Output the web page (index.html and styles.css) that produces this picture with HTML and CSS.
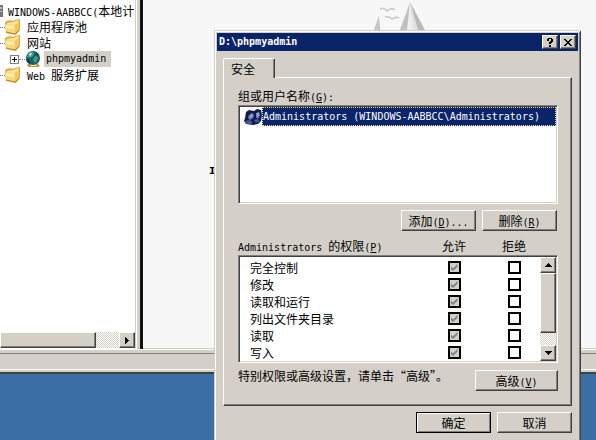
FILE: index.html
```html
<!DOCTYPE html>
<html lang="zh-CN">
<head>
<meta charset="utf-8">
<title>D:\phpmyadmin</title>
<link rel="stylesheet" href="styles.css">
</head>
<body>
<svg class="defs" aria-hidden="true">
  <symbol id="folder" viewBox="0 0 16 16">
    <path d="M0 4l1-2 5-1 1 1 7-2h1v11l-4 5-10-2z" fill="#dfae43"/>
    <path d="M2 4l6-1 6-2v9l-5 4-7-1z" fill="#ffe596"/>
    <path d="M1 5l9 1v9l-9-2z" fill="#fbd97a"/>
    <path d="M1 6l8 1v3l-8-1z" fill="#fff0b8"/>
    <path d="M10 6l4-4v9l-4 4z" fill="#f0c860"/>
    <path d="M1 13l9 2 4-4" fill="none" stroke="#b5842c"/>
  </symbol>
  <symbol id="up" viewBox="0 0 7 4"><path d="M3 0h1v1h1v1h1v1h1v1H0V3h1V2h1V1h1z"/></symbol>
</svg>

<main class="console">
  <div class="panes">
    <nav class="tree" aria-label="控制台树">
      <ul>
        <li class="row root">
          <svg class="server" viewBox="0 0 3 12" aria-hidden="true"><path d="M0 0h3v12H0z" fill="#777"/><path d="M0 2h2v2H0zM0 6h2v1H0z" fill="#bbb"/></svg>
          <span><span class="en">WINDOWS-AABBCC(</span>本地计</span>
        </li>
        <li class="row"><i class="dots"></i><svg class="icon"><use href="#folder"/></svg><span>应用程序池</span></li>
        <li class="row"><i class="dots"></i><svg class="icon"><use href="#folder"/></svg><span>网站</span></li>
        <li class="row child">
          <button class="expander" aria-label="展开"></button><i class="dots"></i>
          <svg class="icon globe" viewBox="0 0 16 16" aria-hidden="true">
            <path d="M4 12h8l3 3-3 1H4l-2-2z" fill="#b99236"/>
            <path d="M5 13h6l1 1-2 1H6z" fill="#ffeec0"/>
            <circle cx="8" cy="7" r="7" fill="#12615f"/>
            <path d="M3 2l4-2 2 2-1 3-3 2-3-1zM10 5l3 1-1 4-2 2-2-3z" fill="#3f9e86"/>
            <path d="M4 3l2-1 1 1-2 2z" fill="#d8fff2"/>
            <path d="M1 8l3 1 1 4-3-2zM11 1l3 3-2 0z" fill="#0b3658"/>
          </svg>
          <span class="en selected">phpmyadmin</span>
        </li>
        <li class="row"><i class="dots"></i><svg class="icon"><use href="#folder"/></svg><span><span class="en">Web </span>服务扩展</span></li>
      </ul>
      <div class="hscroll">
        <div class="thumb"></div>
        <button class="arrow" aria-label="向右滚动"><svg width="4" height="7" viewBox="0 0 4 7"><path d="M0 0h1v1h1v1h1v1h1v1H3v1H2v1H1v1H0z"/></svg></button>
      </div>
    </nav>
    <section class="details" aria-label="详细信息">
      <svg class="sails" viewBox="0 0 54 30" aria-hidden="true">
        <path d="M6 16l1 14H1z" fill="#bbb"/><path d="M6 16l-1 14H3z" fill="#ccc"/>
        <path d="M37 2l-2 28h-8z" fill="#c0c0c0"/>
        <path d="M37 2l-3 28h6z" fill="#eee"/>
        <path d="M37 2l15 28h-8z" fill="#b8b8b8"/>
        <path d="M37 2l8 28h-5z" fill="#e2e2e2"/>
        <path d="M7 9q4-2 7 2 4-4 8-1M12 17q4-1 7 2 4-3 7-1" fill="none" stroke="#c6c6c6" stroke-width="1.5"/>
      </svg>
      <span class="fragment">I</span>
    </section>
  </div>
  <div class="status"></div>
</main>

<div class="dialog" role="dialog" aria-labelledby="title">
  <header class="titlebar">
    <h1 id="title" class="en">D:\phpmyadmin</h1>
    <button class="caption" aria-label="帮助"><svg width="8" height="9" viewBox="0 0 8 9"><path d="M2 0h4v1h1v3H6v1H5v1H3V4h1V3h1V1H3v2H1V1h1zM3 7h2v2H3z"/></svg></button>
    <button class="caption" aria-label="关闭"><svg width="8" height="7" viewBox="0 0 8 7"><path d="M0 0h2v1h1v1h2V1h1V0h2v1H7v1H6v1H5v1h1v1h1v1h1v1H6V6H5V5H3v1H2v1H0V6h1V5h1V4h1V3H2V2H1V1H0z"/></svg></button>
  </header>
  <div class="tabs" role="tablist"><button class="tab" role="tab" aria-selected="true">安全</button></div>
  <section class="panel">
    <p class="label">组或用户名称<span class="en">(<u>G</u>):</span></p>
    <ul class="box users">
      <li class="user">
        <svg class="people" viewBox="0 0 18 16" aria-hidden="true">
          <path d="M2 3l3-2 5 1 3-2 4 1 1 5-1 6-3 3-5 1-7-1-2-3 1-3z" fill="#101c4e"/>
          <path d="M5 6l3-2 2 2-1 3-3 2-2-2zM12 4l3-1 1 3-2 4-2-2z" fill="#7887b8"/>
          <path d="M1 12l5-1 3 3-2 1H2zM10 11l3-1 3 2-4 2z" fill="#4257a2"/>
          <path d="M6 7l2-1v2zM13 5l2-1-1 3z" fill="#c1c8dd"/>
        </svg>
        <span class="en picked">Administrators (WINDOWS-AABBCC\Administrators)</span>
      </li>
    </ul>
    <div class="actions">
      <button class="btn">添加<span class="en">(<u>D</u>)...</span></button>
      <button class="btn">删除<span class="en">(<u>R</u>)</span></button>
    </div>
    <div class="heads">
      <span><span class="en">Administrators </span>的权限<span class="en">(<u>P</u>)</span></span>
      <span class="col">允许</span><span class="col">拒绝</span>
    </div>
    <div class="box perms">
      <table aria-label="Administrators 的权限">
        <tr><th scope="row">完全控制</th><td><input type="checkbox" aria-label="允许完全控制" checked disabled></td><td><input type="checkbox" aria-label="拒绝完全控制"></td></tr>
        <tr><th scope="row">修改</th><td><input type="checkbox" aria-label="允许修改" checked disabled></td><td><input type="checkbox" aria-label="拒绝修改"></td></tr>
        <tr><th scope="row">读取和运行</th><td><input type="checkbox" aria-label="允许读取和运行" checked disabled></td><td><input type="checkbox" aria-label="拒绝读取和运行"></td></tr>
        <tr><th scope="row">列出文件夹目录</th><td><input type="checkbox" aria-label="允许列出文件夹目录" checked disabled></td><td><input type="checkbox" aria-label="拒绝列出文件夹目录"></td></tr>
        <tr><th scope="row">读取</th><td><input type="checkbox" aria-label="允许读取" checked disabled></td><td><input type="checkbox" aria-label="拒绝读取"></td></tr>
        <tr><th scope="row">写入</th><td><input type="checkbox" aria-label="允许写入" checked disabled></td><td><input type="checkbox" aria-label="拒绝写入"></td></tr>
      </table>
      <div class="vscroll">
        <button class="arrow" aria-label="向上滚动"><svg width="7" height="4"><use href="#up"/></svg></button>
        <div class="thumb"></div>
        <button class="arrow" aria-label="向下滚动"><svg class="down" width="7" height="4"><use href="#up"/></svg></button>
      </div>
    </div>
    <div class="advanced">
      <p>特别权限或高级设置，请单击“高级”。</p>
      <button class="btn wide">高级<span class="en">(<u>V</u>)</span></button>
    </div>
  </section>
  <footer class="actions">
    <button class="btn default">确定</button>
    <button class="btn">取消</button>
  </footer>
</div>
</body>
</html>
```
FILE: styles.css
```css
:root {
  --face: #d4d0c8;
  --dark: #404040;
  --shade: #808080;
  --navy: #0a246a;
}
* { box-sizing: border-box; }
html, body { height: 100%; }
body {
  margin: 0;
  overflow: hidden;
  background: #3a6ea5;
  color: #000;
  font: 12px/16px "Noto Sans CJK SC", sans-serif;
}
button {
  font: inherit;
  color: inherit;
  padding: 0;
  border-radius: 0;
}
ul, p, h1 { margin: 0; padding: 0; list-style: none; }
svg { display: block; flex: none; }
.defs { position: absolute; width: 0; height: 0; }
.en {
  font-family: "DejaVu Sans Mono", monospace;
  font-size: 10px;
  line-height: 10px;
  white-space: pre;
}

/* Console window */
.console {
  height: 85%;
  display: flex;
  flex-direction: column;
  background: var(--face);
  border-bottom: 2px solid var(--dark);
}
.panes {
  flex: 1;
  min-height: 0;
  display: grid;
  grid-template-columns: 137px 1fr;
  column-gap: 3px;
  border-bottom: 1px solid #fff;
}
.tree {
  display: flex;
  flex-direction: column;
  justify-content: space-between;
  min-width: 0;
  background: #fff;
  border-right: 1px solid #fff;
  padding: 3px 1px 1px 0;
  box-shadow: inset -1px 0 var(--face);
}
.row { display: flex; align-items: center; height: 16px; white-space: nowrap; }
.root { gap: 5px; }
.server { width: 3px; height: 12px; }
.icon { width: 16px; height: 16px; margin-right: 6px; }
.dots { width: 5px; border-top: 1px dotted var(--shade); }
.child { padding-left: 10px; }
.child .dots { width: 6px; }
.child .icon { margin-right: 3px; }
.expander {
  width: 9px;
  height: 9px;
  border: 1px solid var(--shade);
  background:
    linear-gradient(#000, #000) center / 5px 1px no-repeat,
    linear-gradient(#000, #000) center / 1px 5px no-repeat,
    #fff;
}
.selected { line-height: 16px; background: var(--face); padding: 0 5px 0 2px; }
.hscroll, .vscroll {
  display: flex;
  background: repeating-conic-gradient(#fff 0 25%, var(--face) 0 50%) 0 0 / 2px 2px;
}
.hscroll { height: 16px; }
.hscroll .thumb { width: 96px; }
.hscroll .arrow { margin-left: auto; }
.thumb, .arrow, .caption, .btn {
  background: var(--face);
  border: 1px solid;
  border-color: #fff var(--dark) var(--dark) #fff;
  box-shadow: inset -1px -1px var(--shade);
}
.arrow { width: 16px; height: 16px; display: grid; place-items: center; flex: none; }
.down { transform: rotate(180deg); }
.details {
  position: relative;
  background: #f7f7f7;
  border-left: 3px solid #111;
  box-shadow: inset 0 -1px var(--face);
}
.sails { position: absolute; left: 230px; top: 0; width: 54px; height: 30px; }
.fragment { position: absolute; left: 66px; top: 163px; font: bold 11px/16px "Liberation Mono", monospace; }
.status {
  flex: none;
  height: 19px;
  margin-top: 3px;
  border-top: 1px solid var(--shade);
  border-bottom: 2px solid var(--face);
  box-shadow: inset 0 -1px #fff;
}

/* Properties dialog */
.dialog {
  position: absolute;
  left: 214px;
  right: 15px;
  top: 30px;
  padding: 3px 3px 12px;
  background: var(--face);
  box-shadow:
    inset 1px 1px var(--face),
    inset -1px 0 var(--dark),
    inset 2px 2px #fff,
    inset -2px 0 var(--shade);
}
.titlebar {
  display: flex;
  align-items: center;
  height: 18px;
  padding: 0 2px;
  background: var(--navy);
  color: #fff;
}
.titlebar h1 { flex: 1; font-weight: bold; }
.caption { width: 16px; height: 14px; display: grid; place-items: center; color: #000; }
.caption + .caption { margin-left: 2px; }
.tabs { padding: 7px 6px 0; }
.tab {
  display: block;
  position: relative;
  width: 52px;
  height: 20px;
  margin-bottom: -1px;
  padding-right: 12px;
  line-height: 16px;
  background: var(--face);
  border: 1px solid #fff;
  border-right: 1px solid var(--dark);
  border-bottom: 0;
  border-radius: 2px 2px 0 0;
  box-shadow: inset -1px 0 var(--shade);
}
.panel {
  margin: 0 6px;
  padding: 10px 13px 14px 14px;
  border: 1px solid;
  border-color: #fff var(--dark) var(--dark) #fff;
  box-shadow: inset -1px -1px var(--shade);
}
.label { margin-bottom: 1px; }
.box {
  background: #fff;
  border: 1px solid;
  border-color: var(--shade) #fff #fff var(--shade);
  box-shadow: inset 1px 1px var(--dark), inset -1px -1px var(--face);
}
.users { height: 99px; padding: 1px; }
.user { display: flex; align-items: center; height: 19px; padding-left: 4px; }
.people { width: 18px; height: 16px; }
.picked {
  flex: 1;
  line-height: 17px;
  background: var(--navy);
  color: #fff;
  border: 1px dotted #f5db95;
}
.actions { display: flex; justify-content: flex-end; gap: 6px; margin-top: 6px; }
.panel .actions { padding-right: 1px; }
footer.actions { margin-right: 6px; }
.btn { width: 75px; height: 21px; line-height: 16px; white-space: nowrap; }
.wide { width: 83px; }
.default { outline: 1px solid #000; outline-offset: -1px; border-color: #000; box-shadow: inset 1px 1px #fff, inset -1px -1px var(--shade); }
.heads { display: flex; margin-top: 7px; padding-right: 14px; }
.heads > :first-child { flex: 1; }
.col { width: 60px; text-align: center; }
.perms { display: flex; height: 108px; margin-top: 1px; padding: 1px; overflow: hidden; }
table { flex: 1; border-spacing: 0; height: 102px; margin: 2px -4px 0 0; }
th { font-weight: normal; text-align: left; padding: 0 0 0 10px; }
td { width: 60px; padding: 0; }
tr { height: 17px; line-height: 16px; }
input {
  appearance: none;
  display: block;
  width: 13px;
  height: 13px;
  margin: 0 auto;
  border: 2px solid #000;
  background: #fff;
}
input:checked {
  background: var(--face);
  display: grid;
  place-items: center;
}
input:checked::before {
  content: "";
  width: 7px;
  height: 7px;
  background: var(--shade);
  clip-path: polygon(0 28%, 36% 64%, 100% 0, 100% 40%, 36% 100%, 0 68%);
}
.vscroll { flex-direction: column; width: 16px; position: relative; }
.vscroll .thumb { height: 60px; }
.vscroll .arrow:last-child { margin-top: auto; }
.advanced { display: flex; justify-content: space-between; margin-top: 7px; }
.advanced p { white-space: nowrap; margin-top: -2px; }
```
